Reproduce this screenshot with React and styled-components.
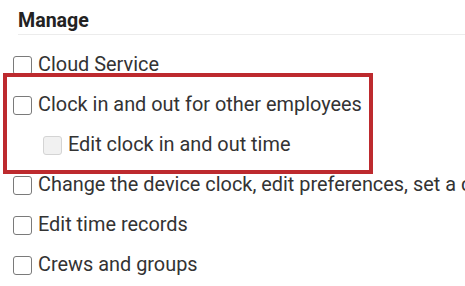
import styled, { createGlobalStyle } from "styled-components";

const GlobalStyle = createGlobalStyle`
  html, body { margin: 0; padding: 0; background: #fff; }
  body { font-family: Roboto, 'Liberation Sans', sans-serif; overflow: hidden; }
`;

const Panel = styled.div`
  width: 465px;
  height: 286px;
  overflow: hidden;
  padding-top: 9px;
  box-sizing: border-box;
`;

const Header = styled.h2`
  margin: 0 0 0 18px;
  padding-bottom: 2px;
  font-size: 19.6px;
  line-height: 23px;
  font-weight: 700;
  color: #222;
  border-bottom: 1px solid #ececec;
`;

const List = styled.div`
  display: flex;
  flex-direction: column;
  padding: 10px 0 0 13px;
`;

// red highlight drawn over the two clock-in rows
const Group = styled.div`
  position: relative;
  display: flex;
  flex-direction: column;

  &::after {
    content: '';
    position: absolute;
    left: -10px; top: -12px;
    width: 370px; height: 101px;
    border: 4px solid #bd2a2e;
    box-sizing: border-box;
    pointer-events: none;
  }
`;

const Row = styled.label`
  display: flex;
  align-items: center;
  gap: 6px;
  height: 40px;
  padding-left: ${(p) => (p.$indent ? "30px" : "0")};
  font-size: 19.9px;
  color: #333;
  white-space: nowrap;
`;

const Label = styled.span`
  position: relative;
  top: -1px;
`;

const Box = styled.span`
  width: 19px;
  height: 19px;
  flex-shrink: 0;
  box-sizing: border-box;
  border-radius: 3px;
  border: 1.5px solid ${(p) => (p.$disabled ? "#d4d4d4" : "#7a7a7a")};
  background: ${(p) => (p.$disabled ? "#f1f1f1" : "#fff")};
`;

const Item = ({ children, indent, disabled }) => (
  <Row $indent={indent}>
    <Box $disabled={disabled} />
    <Label>{children}</Label>
  </Row>
);

export default function App() {
  return (
    <>
      <GlobalStyle />
      <Panel>
        <Header>Manage</Header>
        <List>
          <Item>Cloud Service</Item>
          <Group>
            <Item>Clock in and out for other employees</Item>
            <Item indent disabled>Edit clock in and out time</Item>
          </Group>
          <Item>Change the device clock, edit preferences, set a custom schedule</Item>
          <Item>Edit time records</Item>
          <Item>Crews and groups</Item>
        </List>
      </Panel>
    </>
  );
}
